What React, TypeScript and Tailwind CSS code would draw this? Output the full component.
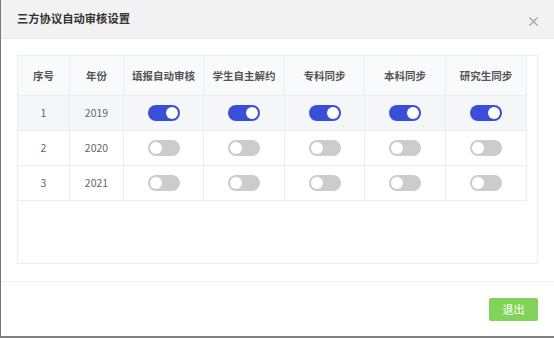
import React from "react";

const rows = [
  { id: 1, year: 2019, on: true },
  { id: 2, year: 2020, on: false },
  { id: 3, year: 2021, on: false },
];

const headers = ["序号", "年份", "填报自动审核", "学生自主解约", "专科同步", "本科同步", "研究生同步"];
const widths = ["w-[52px]", "w-[54px]", "w-[80px]", "w-[81px]", "w-[80px]", "w-[81px]", "w-[81px]"];

function Toggle({ on }: { on: boolean }) {
  return (
    <div
      className={
        on
          ? "w-[32px] h-[16px] rounded-full bg-[#3a4fd7] flex items-center justify-end pr-[2px]"
          : "w-[32px] h-[16px] rounded-full bg-[#cccccc] flex items-center justify-start pl-[2px]"
      }
    >
      <div className="w-[12px] h-[12px] rounded-full bg-white" />
    </div>
  );
}

export default function App() {
  return (
    <div
      className="w-[554px] h-[338px] bg-white border-l border-l-[#777] border-b-2 border-b-[#808080] flex flex-col overflow-hidden"
      style={{ fontFamily: '"Noto Sans CJK SC", "Noto Sans", sans-serif' }}
    >
      <div className="h-[39px] shrink-0 bg-[#f2f2f2] border-b border-[#e9e9e9] flex items-center justify-between pl-[16px] pr-[16px]">
        <span className="text-[11.3px] font-bold text-[#333] leading-none">三方协议自动审核设置</span>
        <svg width="9" height="9" viewBox="0 0 9 9" className="mt-[5px]">
          <path d="M0.5 0.5 L8.5 8.5 M8.5 0.5 L0.5 8.5" stroke="#a0a0a0" strokeWidth="1.1" />
        </svg>
      </div>
      <div className="pl-[16px] pt-[16px]">
        <div className="w-[521px] h-[209px] border border-[#ebeef5]">
          <div className="w-[509px]">
            <div className="flex h-[40px] bg-[#f9fafc]">
              {headers.map((h, i) => (
                <div
                  key={h}
                  className={`${widths[i]} border-r border-b border-[#ebeef5] flex items-center justify-center text-[10.5px] font-bold text-[#555]`}
                >
                  {h}
                </div>
              ))}
            </div>
            {rows.map((r) => (
              <div key={r.id} className={r.on ? "flex h-[35px] bg-[#f4f6fa]" : "flex h-[35px]"}>
                <div className={`${widths[0]} border-r border-b border-[#ebeef5] flex items-center justify-center text-[10.5px] text-[#666]`}>
                  {r.id}
                </div>
                <div className={`${widths[1]} border-r border-b border-[#ebeef5] flex items-center justify-center text-[10.5px] text-[#666]`}>
                  {r.year}
                </div>
                {[2, 3, 4, 5, 6].map((i) => (
                  <div key={i} className={`${widths[i]} border-r border-b border-[#ebeef5] flex items-center justify-center`}>
                    <Toggle on={r.on} />
                  </div>
                ))}
              </div>
            ))}
          </div>
        </div>
      </div>
      <div className="mt-[17px] border-t border-[#f0f0f0] flex justify-end pr-[16px] pt-[16px]">
        <div className="w-[49px] h-[23px] rounded-[2px] bg-[#82d35a] flex items-center justify-center text-white text-[11px]">
          退出
        </div>
      </div>
    </div>
  );
}
